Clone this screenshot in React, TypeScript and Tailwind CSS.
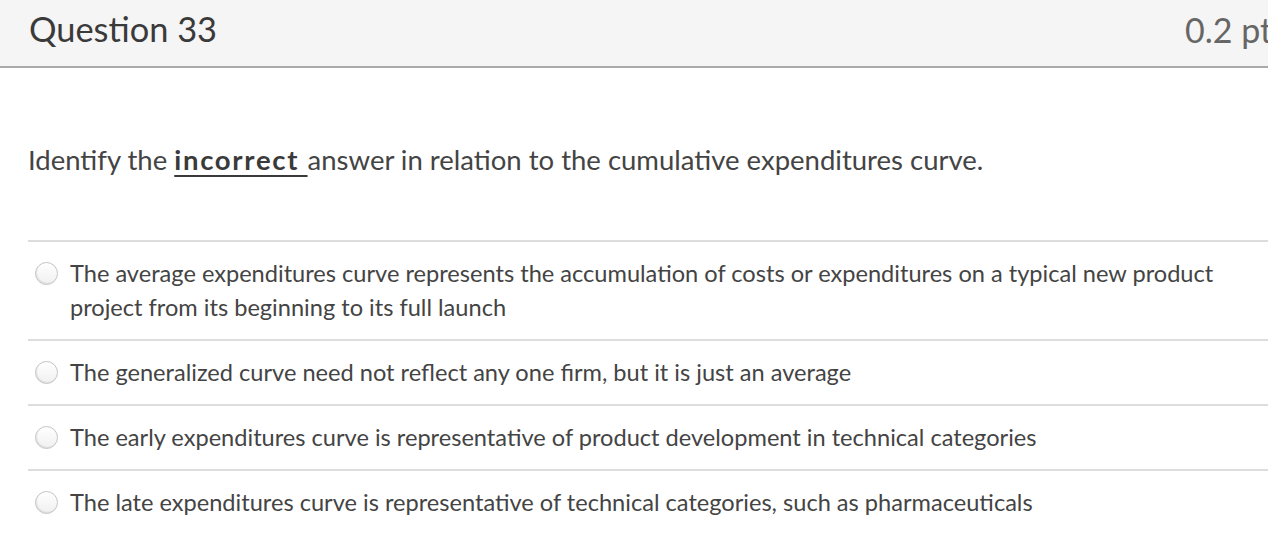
import React from "react";

const answers = [
  "The average expenditures curve represents the accumulation of costs or expenditures on a typical new product project from its beginning to its full launch",
  "The generalized curve need not reflect any one firm, but it is just an average",
  "The early expenditures curve is representative of product development in technical categories",
  "The late expenditures curve is representative of technical categories, such as pharmaceuticals",
];

function Radio() {
  return (
    <span className="mt-[6px] block h-[23px] w-[23px] shrink-0 rounded-full border border-[#c4c4c4] bg-gradient-to-b from-[#ffffff] to-[#f0f0f0] shadow-[inset_1px_-1px_1px_rgba(0,0,0,0.08)]" />
  );
}

export default function App() {
  return (
    <div className="h-[560px] w-[1268px] overflow-hidden bg-white font-['Lato','Noto_Sans',sans-serif]">
      <div className="w-[1300px]">
        <div className="flex h-[68px] items-center justify-between border-b-2 border-[#aaaaaa] bg-[#f5f5f5] pb-[7px] pl-[29px] pr-[13px]">
          <span className="text-[34.4px] leading-none text-[#3a3a3a]">Question 33</span>
          <span className="text-[34px] leading-none text-[#666666]">0.2 pts</span>
        </div>
        <div className="pl-[28px]">
          <p className="pt-[72px] pb-[60px] text-[27.5px] leading-[40px] text-[#444444]">
            Identify the{" "}
            <span className="font-bold tracking-[1.7px] text-[#3a3a3a] underline decoration-[2px] underline-offset-[5px]">incorrect </span>
            answer in relation to the cumulative expenditures curve.
          </p>
          <div>
            {answers.map((a, i) => (
              <div key={i} className="flex gap-[12px] border-t-2 border-[#dddddd] pb-[15px] pt-[14px] pl-[7px]">
                <Radio />
                <span className="w-[1165px] text-[23.6px] leading-[34px] text-[#444444]">{a}</span>
              </div>
            ))}
          </div>
        </div>
      </div>
    </div>
  );
}
